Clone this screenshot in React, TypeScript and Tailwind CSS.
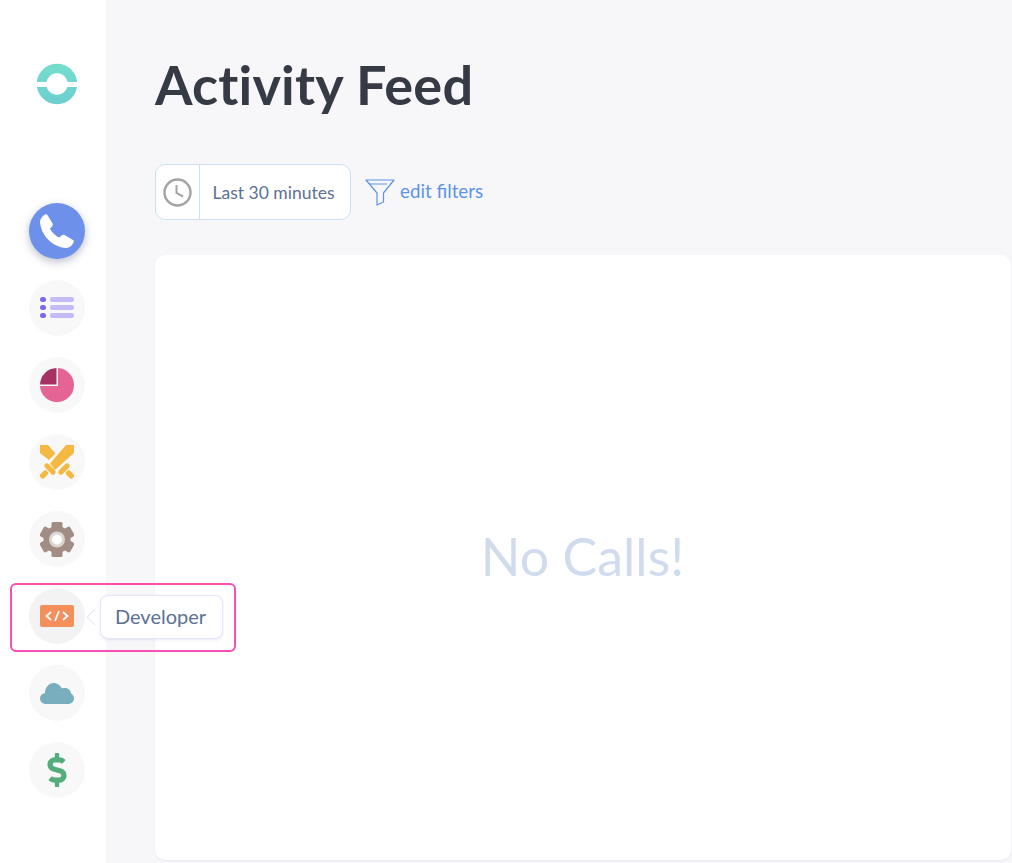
import { FaDollarSign } from "react-icons/fa";

const circle = "flex h-14 w-14 items-center justify-center rounded-full";

function Logo() {
  return (
    <svg width="40" height="42" viewBox="0 0 40 42">
      <defs>
        <linearGradient id="logo" x1="0" y1="0" x2="0" y2="1">
          <stop offset="0" stopColor="#73dccd" />
          <stop offset="1" stopColor="#6dd0cf" />
        </linearGradient>
      </defs>
      <circle cx="20" cy="21" r="15.5" fill="none" stroke="url(#logo)" strokeWidth="9.5" />
      <rect x="0" y="19" width="40" height="5" fill="#ffffff" />
    </svg>
  );
}

function PhoneIcon() {
  return (
    <svg width="34" height="34" viewBox="0 0 34 34" fill="#ffffff">
      <path d="M5 0.5C6 0 7 0 7.5 1L12.5 9.5C13 10.5 13 11.5 12 12.5L10 14.5C10.5 17 16.5 23 19.5 23.5L21.5 21.5C22.5 20.5 23.5 20.5 24.5 21L33 26C34 26.6 34 27.5 33.5 28.5C32 31.5 29.5 34 26 34C12 33 1 21 0 8C0 5 2 2.5 5 0.5Z" />
    </svg>
  );
}

function ListIcon() {
  return (
    <svg width="34" height="22" viewBox="0 0 34 22">
      <rect x="0" y="0" width="6" height="5" rx="2.5" fill="#7b66f5" />
      <rect x="0" y="8" width="6" height="5" rx="2.5" fill="#7b66f5" />
      <rect x="0" y="16" width="6" height="5" rx="2.5" fill="#7b66f5" />
      <rect x="10" y="0" width="24" height="5" rx="2" fill="#c5bafa" />
      <rect x="10" y="8" width="24" height="5" rx="2" fill="#c5bafa" />
      <rect x="10" y="16" width="24" height="5" rx="2" fill="#c5bafa" />
    </svg>
  );
}

function PieIcon() {
  return (
    <svg width="34" height="34" viewBox="0 0 34 34">
      <path d="M18 0.1A17 17 0 1 1 0 18H18Z" fill="#e66495" />
      <path d="M16.5 0A17 17 0 0 0 0 16.5H16.5Z" fill="#a53263" />
    </svg>
  );
}

function SwordsIcon() {
  return (
    <svg width="34" height="34" viewBox="0 0 34 34" fill="#f4b942">
      <path d="M0 0H8L15.5 8.5L9 15L0 8Z" />
      <path d="M34 0V8L15 25L10 18.5L26 0Z" />
      <rect x="-7" y="-2.6" width="14" height="5.2" rx="2.6" transform="translate(10 24) rotate(45)" />
      <rect x="-7" y="-2.6" width="14" height="5.2" rx="2.6" transform="translate(24 24) rotate(-45)" />
      <rect x="-4.5" y="-2.8" width="9" height="5.6" rx="2.2" transform="translate(4 29.5) rotate(-45)" />
      <rect x="-4.5" y="-2.8" width="9" height="5.6" rx="2.2" transform="translate(30 29.5) rotate(45)" />
    </svg>
  );
}

function GearIcon() {
  return (
    <svg width="34" height="35" viewBox="-17 -17.5 34 35">
      <circle r="13.5" fill="#a18d84" />
      {[0, 60, 120, 180, 240, 300].map((a) => (
        <rect key={a} x="-5.5" y="-17.5" width="11" height="8" rx="1.5" fill="#a18d84" transform={`rotate(${a})`} />
      ))}
      <circle r="8" fill="#dcd6d2" />
      <circle r="5" fill="#ffffff" />
    </svg>
  );
}

function CodeIcon() {
  return (
    <div className="flex h-[22px] w-[34px] items-center justify-center rounded-[2px] bg-[#f48e5b]">
      <svg width="24" height="12" viewBox="0 0 24 12" fill="none" stroke="#ffffff" strokeWidth="1.8">
        <path d="M6 2L1.5 6L6 10" />
        <path d="M18 2L22.5 6L18 10" />
        <path d="M14 1L10 11" />
      </svg>
    </div>
  );
}

function CloudIcon() {
  return (
    <svg width="34" height="21" viewBox="0 0 34 21" fill="#78aebd">
      <path d="M6 21C2.5 21 0 18.5 0 15.5C0 12.5 2 10.5 5 10C5 4.5 9 0 13.5 0C17.5 0 20.5 2.5 22 5.5C23 5 24 5 25 5C28.5 5 31 7.5 31 10.5C33 11.5 34 13.5 34 15.5C34 18.5 31.5 21 28 21Z" />
    </svg>
  );
}

function ClockIcon() {
  return (
    <svg width="29" height="29" viewBox="0 0 29 29" fill="none" stroke="#a3a3a3">
      <circle cx="14.5" cy="14.5" r="13" strokeWidth="2.4" />
      <path d="M13.5 7V15L20 18.5" strokeWidth="2" />
    </svg>
  );
}

function FilterIcon() {
  return (
    <svg width="30" height="27" viewBox="0 0 30 27" fill="none" stroke="#5e93e4" strokeWidth="1.2" strokeLinejoin="round">
      <path d="M1 1H29L18.5 14V23L12 26V14Z" />
      <path d="M4 5H22M25 5H26" />
    </svg>
  );
}

export default function App() {
  return (
    <div className="relative flex h-[863px] w-[1012px] overflow-hidden bg-[#f7f7fa] font-['Lato',sans-serif]">
      <aside className="flex w-[106px] shrink-0 flex-col items-center bg-white pl-[8px]">
        <div className="mt-[63px] flex h-[42px] shrink-0 items-center justify-center">
          <Logo />
        </div>
        <nav className="mt-[98px] flex shrink-0 flex-col gap-[21px]">
          <div className={`${circle} bg-[#6d90ea] shadow-[0_3px_8px_rgba(60,70,110,0.35)]`}>
            <PhoneIcon />
          </div>
          <div className={`${circle} bg-[#f8f8f8]`}>
            <ListIcon />
          </div>
          <div className={`${circle} bg-[#f8f8f8]`}>
            <PieIcon />
          </div>
          <div className={`${circle} bg-[#f8f8f8]`}>
            <SwordsIcon />
          </div>
          <div className={`${circle} bg-[#f8f8f8]`}>
            <GearIcon />
          </div>
          <div className={`${circle} bg-[#f3f3f3]`}>
            <CodeIcon />
          </div>
          <div className={`${circle} bg-[#f8f8f8]`}>
            <CloudIcon />
          </div>
          <div className={`${circle} bg-[#f8f8f8]`}>
            <FaDollarSign className="h-[34px] w-[34px] text-[#52ad7b]" />
          </div>
        </nav>
      </aside>

      <main className="flex min-w-0 flex-1 flex-col pl-[49px] pr-px pb-[3px]">
        <h1 className="mt-[51px] text-[54px] leading-[68px] font-bold tracking-[0.2px] text-[#353a45]">Activity Feed</h1>
        <div className="mt-[45px] flex items-start">
          <div className="flex h-14 w-[196px] items-stretch rounded-[10px] border-[1.5px] border-[#cde0f6] bg-white">
            <div className="flex w-11 items-center justify-center border-r-[1.5px] border-[#cde0f6]">
              <ClockIcon />
            </div>
            <div className="flex flex-1 items-center justify-center pt-[3px] pr-[3px] text-[17.5px] text-[#5c7193]">Last 30 minutes</div>
          </div>
          <div className="mt-[15px] ml-[14px] flex items-start gap-[5px]">
            <FilterIcon />
            <span className="text-[18.8px] leading-6 text-[#5e93e4]">edit filters</span>
          </div>
        </div>
        <section className="mt-[35px] flex flex-1 items-center justify-center rounded-[10px] bg-white shadow-[0_1px_2px_rgba(120,120,160,0.12)]">
          <span className="mt-[-3px] ml-[-1px] text-[52px] text-[#d0dcee]">No Calls!</span>
        </section>
      </main>

      <div className="absolute top-[595px] left-[87px] h-[44px] w-[136px]">
        <div className="absolute top-[16px] left-[2px] h-[12px] w-[12px] rotate-45 border-b border-l border-[#e3e5fb] bg-white" />
        <div className="absolute inset-y-0 right-0 flex w-[123px] items-center justify-center rounded-[8px] border border-[#e3e5fb] bg-white pr-[2px] pb-[2px] text-[20px] text-[#5c7193] shadow-[0_1px_3px_rgba(110,110,200,0.15)]">
          Developer
        </div>
      </div>
      <div className="absolute top-[583px] left-[10px] h-[69px] w-[226px] rounded-[6px] border-2 border-[#fb4eb4]" />
    </div>
  );
}
